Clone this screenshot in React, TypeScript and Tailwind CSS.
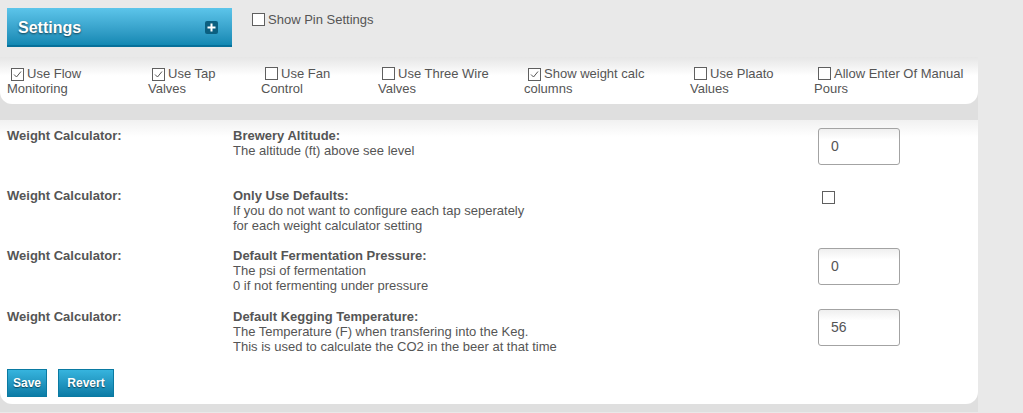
import React from 'react';

interface Setting {
  title: string;
  lines: string[];
  kind: 'input' | 'checkbox';
  value?: string;
  height: string;
}

const toggles = [
  { top: 'Use Flow', bottom: 'Monitoring', checked: true, width: 'w-[141px]' },
  { top: 'Use Tap', bottom: 'Valves', checked: true, width: 'w-[113px]' },
  { top: 'Use Fan', bottom: 'Control', checked: false, width: 'w-[117px]' },
  { top: 'Use Three Wire', bottom: 'Valves', checked: false, width: 'w-[146px]' },
  { top: 'Show weight calc', bottom: 'columns', checked: true, width: 'w-[166px]' },
  { top: 'Use Plaato', bottom: 'Values', checked: false, width: 'w-[124px]' },
  { top: 'Allow Enter Of Manual', bottom: 'Pours', checked: false, width: 'w-[160px]' },
];

const settings: Setting[] = [
  {
    title: 'Brewery Altitude:',
    lines: ['The altitude (ft) above see level'],
    kind: 'input',
    value: '0',
    height: 'h-[60px]',
  },
  {
    title: 'Only Use Defaults:',
    lines: ['If you do not want to configure each tap seperately', 'for each weight calculator setting'],
    kind: 'checkbox',
    height: 'h-[60px]',
  },
  {
    title: 'Default Fermentation Pressure:',
    lines: ['The psi of fermentation', '0 if not fermenting under pressure'],
    kind: 'input',
    value: '0',
    height: 'h-[61px]',
  },
  {
    title: 'Default Kegging Temperature:',
    lines: ['The Temperature (F) when transfering into the Keg.', 'This is used to calculate the CO2 in the beer at that time'],
    kind: 'input',
    value: '56',
    height: 'h-[60px]',
  },
];

function Box({ checked }: { checked: boolean }) {
  return (
    <span className="inline-flex w-[13px] h-[13px] border border-[#5f5f5f] bg-white align-[-2px] mr-[3px] items-center justify-center">
      {checked && (
        <svg width="11" height="11" viewBox="0 0 11 11">
          <polyline points="2,5.5 4.5,8 9,2.5" fill="none" stroke="#555" strokeWidth="1" />
        </svg>
      )}
    </span>
  );
}

function BlueButton({ label, width }: { label: string; width: string }) {
  return (
    <button
      className={`${width} h-[28px] border border-[#0a7aa2] bg-gradient-to-b from-[#36b4de] to-[#0b7ca6] text-white text-[12px] font-bold [text-shadow:0_1px_1px_rgba(0,0,0,0.5)]`}
    >
      {label}
    </button>
  );
}

export default function App() {
  return (
    <div className="min-h-screen bg-[#e9e9e9] font-['Liberation_Sans',Arial,sans-serif] text-[13px] leading-[15px] text-[#555]">
      {/* Top bar */}
      <div className="flex items-start pt-2 pl-[7px]">
        <div className="w-[225px] h-[39px] flex items-center justify-between pl-[11px] pr-[14px] pt-[2px] bg-gradient-to-b from-[#5cc5ea] to-[#1188b3] border-b-2 border-[#06709a]">
          <span className="text-white text-[16px] font-bold [text-shadow:0_1px_2px_rgba(0,0,0,0.6)]">Settings</span>
          <span className="w-[13px] h-[13px] rounded-[2px] bg-[#0b5f80] flex items-center justify-center">
            <svg width="9" height="9" viewBox="0 0 9 9">
              <rect x="3.5" y="0.5" width="2" height="8" fill="white" />
              <rect x="0.5" y="3.5" width="8" height="2" fill="white" />
            </svg>
          </span>
        </div>
        <label className="ml-5 mt-1 flex items-center">
          <Box checked={false} />
          <span>Show Pin Settings</span>
        </label>
      </div>

      <div className="w-[978px] mt-[10px] bg-[#dfdfdf]">
        {/* Feature toggles */}
        <div className="flex pl-[7px] pt-[9px] pb-[8px] rounded-b-xl bg-gradient-to-b from-[#e6e6e6] via-white via-40% to-white">
          {toggles.map((t) => (
            <div key={t.top} className={t.width}>
              <span className="pl-1">
                <Box checked={t.checked} />
                {t.top}
              </span>
              <br />
              {t.bottom}
            </div>
          ))}
        </div>

        <div className="h-4" />

        {/* Weight calculator settings */}
        <div className="pl-[7px] pt-[8px] pb-[7px] rounded-b-xl bg-gradient-to-b from-[#f1f1f1] via-white via-[6%] to-white">
          {settings.map((s) => (
            <div key={s.title} className={`flex ${s.height}`}>
              <div className="w-[226px] font-bold">Weight Calculator:</div>
              <div className="w-[585px]">
                <div className="font-bold">{s.title}</div>
                {s.lines.map((l) => (
                  <div key={l}>{l}</div>
                ))}
              </div>
              <div>
                {s.kind === 'input' ? (
                  <div className="w-[82px] h-[37px] border border-[#a3a3a3] rounded-[3px] bg-gradient-to-b from-[#efefef] via-white via-30% to-white flex items-center pl-[12px] text-[14px]">
                    {s.value}
                  </div>
                ) : (
                  <div className="pl-1 pt-[2px]">
                    <Box checked={false} />
                  </div>
                )}
              </div>
            </div>
          ))}
          <div className="flex gap-[11px]">
            <BlueButton label="Save" width="w-[40px]" />
            <BlueButton label="Revert" width="w-[56px]" />
          </div>
        </div>

        <div className="h-2" />
      </div>
    </div>
  );
}
